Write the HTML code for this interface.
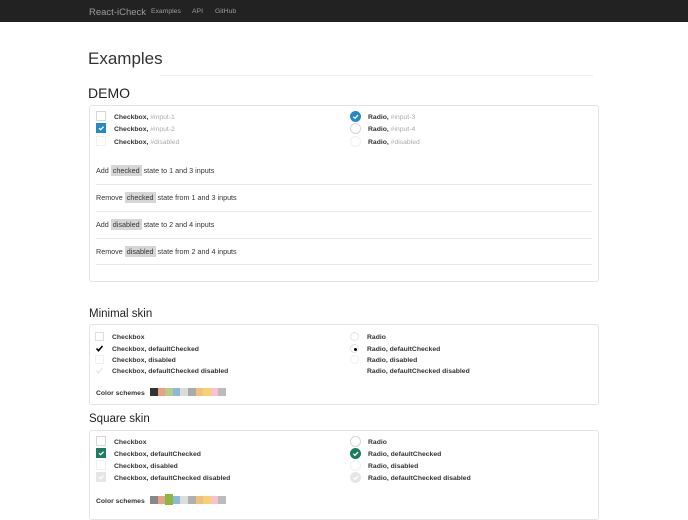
<!DOCTYPE html>
<html><head><meta charset="utf-8"><style>
*{margin:0;padding:0;box-sizing:border-box}
body{width:688px;height:512px;overflow:hidden;background:#fff;font-family:"Liberation Sans",Arial,sans-serif;color:#333;position:relative}
.a{position:absolute;white-space:nowrap}
.nav{left:0;top:0;width:688px;height:22px;background:#222}
.panel{position:absolute;border:1px solid #e3e3e3;border-radius:3px;background:#fff}
.lbl{font-size:6.8px;font-weight:bold;color:#333;margin-top:1.5px}
.g{color:#aaa;font-weight:normal}
.cb{position:absolute;width:10px;height:10px;border:1px solid #d6d6d6;background:#fff}
.rd{position:absolute;width:11px;height:11px;border:1px solid #d6d6d6;border-radius:50%;background:#fff}
.dis{border-color:#f0f0f0}
.row{font-size:7.2px;color:#333}
.code{background:#d6d6d6;padding:1px 2px}
.line{position:absolute;left:96px;width:496px;height:1px;background:#e8e8e8}
.sw{position:absolute;top:0;width:7.6px;height:8px}
</style></head><body>
<div class="a nav"></div>
<div class="a" style="left:89px;top:6.5px;font-size:9.5px;color:#9d9d9d">React-iCheck</div>
<div class="a" style="left:151px;top:8px;font-size:6.8px;color:#9d9d9d">Examples</div>
<div class="a" style="left:192px;top:8px;font-size:6.8px;color:#9d9d9d">API</div>
<div class="a" style="left:215px;top:8px;font-size:6.8px;color:#9d9d9d">GitHub</div>

<div class="a" style="left:88px;top:49px;font-size:17px;color:#333">Examples</div>
<div class="a" style="left:160px;top:75px;width:433px;height:1px;background:#eee"></div>
<div class="a" style="left:88px;top:85px;font-size:14px;color:#222">DEMO</div>

<div class="panel" style="left:89px;top:105px;width:510px;height:177px"></div>
<div class="cb" style="left:96px;top:111px"></div>
<div class="cb" style="left:96px;top:123px;background:#2489c5;border-color:#2489c5"><svg width="10" height="10" style="position:absolute;left:-1px;top:-1px"><path d="M3 5.2l1.6 1.5 3-3" stroke="#fff" stroke-width="1.3" fill="none"/></svg></div>
<div class="cb dis" style="left:96px;top:136px"></div>
<div class="a lbl" style="left:114px;top:112px">Checkbox, <span class="g">#input-1</span></div>
<div class="a lbl" style="left:114px;top:124px">Checkbox, <span class="g">#input-2</span></div>
<div class="a lbl" style="left:114px;top:137px">Checkbox, <span class="g">#disabled</span></div>
<div class="rd" style="left:350px;top:111px;background:#2489c5;border-color:#2489c5"><svg width="11" height="11" style="position:absolute;left:-1px;top:-1px"><path d="M3.3 5.7l1.7 1.6 3-3.2" stroke="#fff" stroke-width="1.3" fill="none"/></svg></div>
<div class="rd" style="left:350px;top:123px"></div>
<div class="rd dis" style="left:350px;top:136px"></div>
<div class="a lbl" style="left:368px;top:112px">Radio, <span class="g">#input-3</span></div>
<div class="a lbl" style="left:368px;top:124px">Radio, <span class="g">#input-4</span></div>
<div class="a lbl" style="left:368px;top:137px">Radio, <span class="g">#disabled</span></div>

<div class="a row" style="left:96px;top:166px">Add <span class="code">checked</span> state to 1 and 3 inputs</div>
<div class="line" style="top:184px"></div>
<div class="a row" style="left:96px;top:193px">Remove <span class="code">checked</span> state from 1 and 3 inputs</div>
<div class="line" style="top:211px"></div>
<div class="a row" style="left:96px;top:220px">Add <span class="code">disabled</span> state to 2 and 4 inputs</div>
<div class="line" style="top:238px"></div>
<div class="a row" style="left:96px;top:247px">Remove <span class="code">disabled</span> state from 2 and 4 inputs</div>
<div class="line" style="top:264px"></div>

<div class="a" style="left:89px;top:308px;font-size:11.5px;color:#222">Minimal skin</div>
<div class="panel" style="left:89px;top:324px;width:510px;height:81px"></div>
<div class="cb" style="left:95px;top:332px;width:9px;height:9px;border-color:#ddd"></div>
<svg class="a" style="left:95px;top:344px" width="9" height="9"><path d="M1.5 4.5l2 2.2 4-4.7" stroke="#000" stroke-width="1.6" fill="none"/></svg>
<div class="cb dis" style="left:95px;top:355px;width:9px;height:9px"></div>
<svg class="a" style="left:95px;top:366px" width="9" height="9"><path d="M1.5 4.5l2 2.2 4-4.7" stroke="#e8e8e8" stroke-width="1.4" fill="none"/></svg>
<div class="a lbl" style="left:112px;top:332px">Checkbox</div>
<div class="a lbl" style="left:112px;top:344px">Checkbox, defaultChecked</div>
<div class="a lbl" style="left:112px;top:355px">Checkbox, disabled</div>
<div class="a lbl" style="left:112px;top:366px">Checkbox, defaultChecked disabled</div>
<div class="rd" style="left:350px;top:332px;width:9px;height:9px;border-color:#e5e5e5"></div>
<div class="rd" style="left:350px;top:344px;width:9px;height:9px;border-color:#e5e5e5"><div style="position:absolute;left:2.5px;top:2.5px;width:3px;height:3px;border-radius:50%;background:#000"></div></div>
<div class="rd dis" style="left:350px;top:355px;width:9px;height:9px"></div>
<div class="a lbl" style="left:367px;top:332px">Radio</div>
<div class="a lbl" style="left:367px;top:344px">Radio, defaultChecked</div>
<div class="a lbl" style="left:367px;top:355px">Radio, disabled</div>
<div class="a lbl" style="left:367px;top:366px">Radio, defaultChecked disabled</div>
<div class="a lbl" style="left:96px;top:388px">Color schemes</div>
<div class="a" style="left:150px;top:388px;width:77px;height:8px">
<div class="sw" style="left:0;background:#333"></div><div class="sw" style="left:7.6px;background:#e8a088"></div><div class="sw" style="left:15.2px;background:#b8cc88"></div><div class="sw" style="left:22.8px;background:#88bbd8"></div><div class="sw" style="left:30.4px;background:#dcdcdc"></div><div class="sw" style="left:38px;background:#aaa"></div><div class="sw" style="left:45.6px;background:#f0c080"></div><div class="sw" style="left:53.2px;background:#f8d070"></div><div class="sw" style="left:60.8px;background:#f8c0d0"></div><div class="sw" style="left:68.4px;background:#bbb"></div></div>

<div class="a" style="left:89px;top:413px;font-size:11.5px;color:#222">Square skin</div>
<div class="panel" style="left:89px;top:430px;width:510px;height:90px"></div>
<div class="cb" style="left:96px;top:436px;width:10px;height:10px"></div>
<div class="cb" style="left:96px;top:448px;background:#1b7e5a;border-color:#1b7e5a"><svg width="10" height="10" style="position:absolute;left:-1px;top:-1px"><path d="M3 5.2l1.6 1.5 3-3" stroke="#fff" stroke-width="1.3" fill="none"/></svg></div>
<div class="cb dis" style="left:96px;top:460px"></div>
<div class="cb" style="left:96px;top:472px;background:#e6e6e6;border-color:#e6e6e6"><svg width="10" height="10" style="position:absolute;left:-1px;top:-1px"><path d="M3 5.2l1.6 1.5 3-3" stroke="#fff" stroke-width="1.3" fill="none"/></svg></div>
<div class="a lbl" style="left:114px;top:437px">Checkbox</div>
<div class="a lbl" style="left:114px;top:449px">Checkbox, defaultChecked</div>
<div class="a lbl" style="left:114px;top:461px">Checkbox, disabled</div>
<div class="a lbl" style="left:114px;top:473px">Checkbox, defaultChecked disabled</div>
<div class="rd" style="left:350px;top:436px"></div>
<div class="rd" style="left:350px;top:448px;background:#1b7e5a;border-color:#1b7e5a"><svg width="11" height="11" style="position:absolute;left:-1px;top:-1px"><path d="M3.3 5.7l1.7 1.6 3-3.2" stroke="#fff" stroke-width="1.3" fill="none"/></svg></div>
<div class="rd dis" style="left:350px;top:460px"></div>
<div class="rd" style="left:350px;top:472px;background:#e6e6e6;border-color:#e6e6e6"><svg width="11" height="11" style="position:absolute;left:-1px;top:-1px"><path d="M3.3 5.7l1.7 1.6 3-3.2" stroke="#fff" stroke-width="1.3" fill="none"/></svg></div>
<div class="a lbl" style="left:368px;top:437px">Radio</div>
<div class="a lbl" style="left:368px;top:449px">Radio, defaultChecked</div>
<div class="a lbl" style="left:368px;top:461px">Radio, disabled</div>
<div class="a lbl" style="left:368px;top:473px">Radio, defaultChecked disabled</div>
<div class="a lbl" style="left:96px;top:496px">Color schemes</div>
<div class="a" style="left:150px;top:496px;width:77px;height:8px">
<div class="sw" style="left:0;background:#888"></div><div class="sw" style="left:7.6px;background:#e8a088"></div><div class="sw" style="left:15.2px;top:-2px;height:11px;background:#8ab840"></div><div class="sw" style="left:22.8px;background:#88bbd8"></div><div class="sw" style="left:30.4px;background:#ddd"></div><div class="sw" style="left:38px;background:#b0b0b0"></div><div class="sw" style="left:45.6px;background:#f0c080"></div><div class="sw" style="left:53.2px;background:#f8d070"></div><div class="sw" style="left:60.8px;background:#f8c0d0"></div><div class="sw" style="left:68.4px;background:#bbb"></div></div>
</body></html>
